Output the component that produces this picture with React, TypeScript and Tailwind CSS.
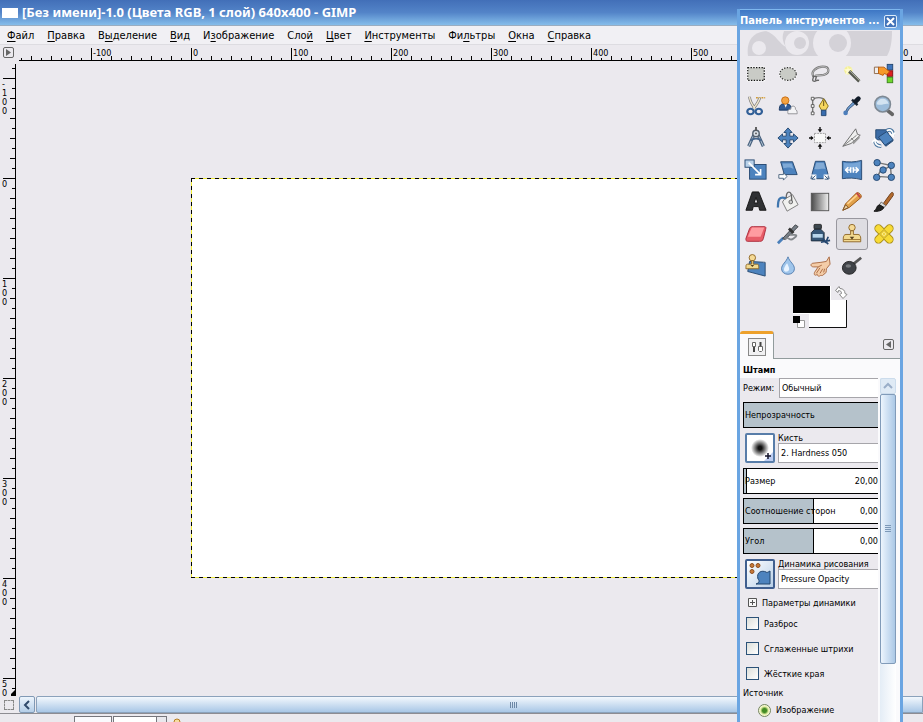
import React, { useEffect, useState } from "react";

const menu = [
  ["", "Ф", "айл"],
  ["", "П", "равка"],
  ["В", "ы", "деление"],
  ["", "В", "ид"],
  ["И", "з", "ображение"],
  ["Сло", "й", ""],
  ["", "Ц", "вет"],
  ["", "И", "нструменты"],
  ["Фи", "л", "ьтры"],
  ["", "О", "кна"],
  ["", "С", "правка"],
];

const blue = "#4d83be";
const navy = "#23466f";

const tools: { name: string; icon: React.ReactNode }[] = [
  {
    name: "Прямоугольное выделение",
    icon: (
      <>
        <rect x="2" y="4" width="20" height="16" fill="#fff" />
        <rect x="3" y="5" width="18" height="14" fill="#c9cbc6" stroke="#111" strokeWidth="1.3" strokeDasharray="1.5 1.5" />
      </>
    ),
  },
  {
    name: "Эллиптическое выделение",
    icon: (
      <>
        <ellipse cx="12" cy="12" rx="10" ry="8" fill="#fff" />
        <ellipse cx="12" cy="12" rx="9" ry="7" fill="#c9cbc6" stroke="#333" strokeWidth="1.3" strokeDasharray="1.5 1.5" />
      </>
    ),
  },
  {
    name: "Свободное выделение",
    icon: (
      <g fill="none">
        <path d="M5 15C1 9 9 4 15 4c8 0 8 7 1 9-4 1-7 0-9 1" stroke="#777" strokeWidth="2.4" />
        <path d="M5 15C1 9 9 4 15 4c8 0 8 7 1 9-4 1-7 0-9 1" stroke="#d5d5d5" strokeWidth=".8" />
        <path d="M4 14l4 1-1 4M5 15c-1 3-2 5 1 5 2 0 2-2 5-1" stroke="#666" strokeWidth="1.5" />
      </g>
    ),
  },
  {
    name: "Выделение смежных областей",
    icon: (
      <>
        <circle cx="8" cy="8" r="4.5" fill="#f5f197" />
        <path d="M7 3l1.5 3.500L12 6l-2 3 2 3-4-1-3 2 1-4-3-2 4-.5z" fill="#fffbd0" />
        <path d="M9 9l11 11" stroke="#55584f" strokeWidth="3.500" />
        <path d="M9.500 8.500l11 11" stroke="#b5b8a7" />
      </>
    ),
  },
  {
    name: "Выделение по цвету",
    icon: (
      <>
        <rect x="15.500" y="1.500" width="6" height="6" fill="#3f74bb" stroke={navy} />
        <rect x="15.500" y="8.500" width="6" height="6" fill="#dc2020" stroke="#850f0f" />
        <rect x="15.500" y="15.500" width="6" height="6" fill="#6fd82c" stroke="#39831a" />
        <path d="M1.500 4.500h5v7h-5z" fill="#eee" stroke="#8c6545" />
        <path d="M6 4.500h6l6 5-3 3-3-1-1 2-5-2z" fill="#f79a2b" stroke="#ba5c0d" />
      </>
    ),
  },
  {
    name: "Умные ножницы",
    icon: (
      <g fill="none">
        <path d="M12 3h10" stroke="#d29b33" strokeWidth="1.500" strokeDasharray="2 1" />
        <path d="M5 2c0 5 3 9 6 13M16 3c-1 5-4 8-7 12" stroke="#777" strokeWidth="3" />
        <path d="M5 2c0 5 3 9 6 13M16 3c-1 5-4 8-7 12" stroke="#eee5cb" strokeWidth="1.500" />
        <ellipse cx="6" cy="18" rx="3.500" ry="3" stroke="#315f97" strokeWidth="2.400" />
        <ellipse cx="15" cy="18" rx="3.500" ry="3" stroke="#315f97" strokeWidth="2.400" />
      </g>
    ),
  },
  {
    name: "Выделение переднего плана",
    icon: (
      <>
        <path d="M2.500 16.500c0-6 2-7 6.500-7s7 2 7 7z" fill="#315b96" stroke="#17345e" />
        <path d="M8 10l1.500 4L11 10z" fill="#fff" />
        <circle cx="9" cy="6" r="4" fill="#f5a442" stroke="#c66b12" />
        <path d="M12 20.500c-1-4 1-5 3-5 0-5 6-4 5 0 2 1 2 3 2 5z" fill="#f4f4f6" stroke="#8e8e93" />
      </>
    ),
  },
  {
    name: "Контуры",
    icon: (
      <>
        <path d="M4 4v16M5 4c8-3 13 0 14 6" fill="none" stroke="#777" strokeWidth="1.500" />
        <path d="M2.500 2.500h3v3h-3zM2.500 10.500h3v3h-3zM2.500 18.500h3v3h-3z" fill="#fff" stroke="#555" />
        <path d="M16 4l5 8-3 5h-4l-3-5z" fill="#f6d75f" stroke="#836b12" />
        <path d="M16 6v6" stroke="#614f14" />
        <path d="M13.500 16.500h5v6h-5z" fill="#386cae" stroke={navy} />
      </>
    ),
  },
  {
    name: "Пипетка",
    icon: (
      <>
        <path d="M14 7L7 14l-3 6 1 1 4-6 7-6z" fill="#6d9bd0" stroke="#39577a" />
        <path d="M12 5l6 6" stroke="#182431" strokeWidth="2.500" />
        <path d="M16 7l3-3" stroke="#111b28" strokeWidth="5" strokeLinecap="round" />
        <circle cx="5" cy="19.500" r="2.500" fill="#4d7ebb" />
      </>
    ),
  },
  {
    name: "Лупа",
    icon: (
      <>
        <path d="M16 17l5 4" stroke="#666" strokeWidth="4" strokeLinecap="round" />
        <circle cx="10.500" cy="10" r="8.500" fill="#9dbddb" stroke="#7e8994" strokeWidth="1.800" />
        <path d="M4 10c1-8 12-8 13 0-3-2-7 2-13 0z" fill="#d3e3f1" />
      </>
    ),
  },
  {
    name: "Измеритель",
    icon: (
      <>
        <path d="M10 8L4 21M14 8l6 13" stroke="#49627e" strokeWidth="3.500" />
        <path d="M10 8L4 21M14 8l6 13" stroke="#b9cada" />
        <path d="M6 15c3-3 9-3 12 0" fill="none" stroke="#46678e" strokeWidth="1.800" />
        <circle cx="12" cy="7" r="3.500" fill="#dae1e8" stroke="#53606e" strokeWidth="1.500" />
        <circle cx="12" cy="7" r="1" fill="#555" />
        <path d="M12 0v4" stroke="#555" strokeWidth="2" />
      </>
    ),
  },
  {
    name: "Перемещение",
    icon: (
      <path
        d="M12 1l4.500 5h-2.500v4h4V7.500l5 4.500-5 4.500V14h-4v4h2.500L12 23l-4.500-5H10v-4H6v2.500L1 12l5-4.500V10h4V6H7.500z"
        fill={blue}
        stroke={navy}
      />
    ),
  },
  {
    name: "Выравнивание",
    icon: (
      <>
        <rect x="6" y="7" width="12" height="10" fill="#f8f8f8" stroke="#999" strokeDasharray="2 1" />
        <path d="M12 0v4M12 20v4M0 12h4M20 12h4" stroke="#111" strokeWidth="1.500" />
        <path d="M9.500 2.500h5L12 6zM9.500 21.500h5L12 18zM2 9.500v5L5 12zM22 9.500v5L19 12z" fill="#111" />
      </>
    ),
  },
  {
    name: "Кадрирование",
    icon: (
      <>
        <path d="M2 21L16 2l2 6 3 1-10 9z" fill="#efefef" stroke="#666" />
        <path d="M2 21L17 9M11 12l3 3" fill="none" stroke="#777" />
        <path d="M13 18l7-7" stroke="#999" strokeWidth="2" />
      </>
    ),
  },
  {
    name: "Вращение",
    icon: (
      <>
        <path d="M3 3h13v5l6 7-8 6-5-7H3z" fill="#3b6ba5" stroke={navy} />
        <path d="M6 11l9-6 7 9-9 6z" fill={blue} stroke={navy} />
        <path d="M15 4c4-2 7 0 7 5M2 14c0 5 3 7 7 7" fill="none" stroke="#48759f" strokeWidth="4" />
        <path d="M15 4c4-2 7 0 7 5M2 14c0 5 3 7 7 7M-1 17l3-4 4 4M18 7l4 3 2-4" fill="none" stroke="#fff" strokeWidth="1.800" />
      </>
    ),
  },
  {
    name: "Масштаб",
    icon: (
      <>
        <rect x="5" y="6" width="18" height="16" fill={blue} stroke={navy} />
        <rect x="0" y="1" width="10" height="8" fill="#b8d1e9" stroke={navy} />
        <path d="M4 4l12 12M17 11v6h-6" fill="none" stroke="#fff" strokeWidth="1.800" />
      </>
    ),
  },
  {
    name: "Искривление",
    icon: (
      <>
        <path d="M4 3h13l5 14H8z" fill={blue} stroke={navy} />
        <path d="M6 5h10l2 6C13 8 11 10 7 10z" fill="#7ea9d6" />
        <path d="M2 17h5v-2l4 4-4 4v-2H2z" fill="#fff" stroke="#49627c" />
      </>
    ),
  },
  {
    name: "Перспектива",
    icon: (
      <>
        <path d="M7 2.500h10l5 19H2z" fill={blue} stroke={navy} />
        <path d="M8 4h8l2 7c-5-1-7 1-12 0z" fill="#83abd5" />
        <path d="M2 17h6v6H2zM16 17h6v6h-6z" fill="#fff" />
        <path d="M3 22l4-4M3 18v4h4M17 18l4 4M21 18v4h-4" fill="none" stroke={navy} />
      </>
    ),
  },
  {
    name: "Зеркало",
    icon: (
      <>
        <path d="M1.500 2.500c6 1 14 1 21-1v21c-7-2-15-2-21-1z" fill={blue} stroke={navy} />
        <path d="M3 4c7 1 12 1 18-1v8H3z" fill="#78a6d7" />
        <path d="M10.500 9v6M10.500 12H5m3-3l-3 3 3 3M13.500 9v6m0-3H19m-3-3l3 3-3 3" fill="none" stroke="#fff" strokeWidth="1.800" />
      </>
    ),
  },
  {
    name: "Преобразование рамкой",
    icon: (
      <>
        <path d="M5 4l14 3 1 13-15-1 3-6 4-1 7-5" fill="none" stroke="#777" strokeWidth="1.500" />
        <g fill={blue} stroke={navy}>
          <circle cx="4.500" cy="4" r="3.500" />
          <circle cx="20" cy="7" r="3.500" />
          <circle cx="11" cy="12" r="3.500" />
          <circle cx="4" cy="20" r="3.500" />
          <circle cx="20" cy="20" r="3.500" />
        </g>
      </>
    ),
  },
  {
    name: "Текст",
    icon: <path d="M8 1h7l8 20h-7l-1-4H9l-1 4H1zM12 7l-2 6h4z" fill="#303134" stroke="#111" fillRule="evenodd" />,
  },
  {
    name: "Плоская заливка",
    icon: (
      <>
        <path d="M8 9l9-5 6 11-12 7-5-10z" fill="#f1f1ef" stroke="#777" />
        <path d="M10 8c-8-3-9 2-9 10" fill="none" stroke="#3f76ae" strokeWidth="2.500" />
        <path d="M10 8c0-9 6-9 6 0v4" fill="none" stroke="#666" strokeWidth="1.500" />
        <circle cx="15" cy="12" r="2" fill="#ccc" stroke="#666" />
      </>
    ),
  },
  {
    name: "Градиент",
    icon: (
      <>
        <defs>
          <linearGradient id="toolGradient">
            <stop stopColor="#4a4a4a" />
            <stop offset="1" stopColor="#f1f1f1" />
          </linearGradient>
        </defs>
        <rect x="2.500" y="2.500" width="19" height="19" fill="url(#toolGradient)" stroke="#555" />
      </>
    ),
  },
  {
    name: "Карандаш",
    icon: (
      <>
        <path d="M2 21l3-7L17 2c2-1 6 2 5 5L9 18z" fill="#e0a04a" stroke="#98530f" />
        <path d="M7 14L18 4" stroke="#ffd18a" strokeWidth="2" />
        <path d="M2 21l3-6 3 3z" fill="#f1d4a2" stroke="#7a5022" />
        <path d="M17 2l4 5" stroke="#c34848" strokeWidth="2" />
      </>
    ),
  },
  {
    name: "Кисть",
    icon: (
      <>
        <path d="M11 14L19 3c2-3 4-1 3 2l-8 11z" fill="#b36b2e" stroke="#693a16" />
        <path d="M9 12l5 4-2 2-5-3z" fill="#ddd" stroke="#666" />
        <path d="M1 22c4-2 2-6 6-7l5 3c-1 3-7 5-11 4z" fill="#222" stroke="#111" />
      </>
    ),
  },
  {
    name: "Ластик",
    icon: (
      <>
        <path d="M1 17L5 6c1-2 2-2 4-2h12c2 0 2 1 1.500 3L20 17c-1 3-2 3-4 3H3c-2 0-2-1-2-3z" fill="#e75d68" stroke="#aa2838" />
        <path d="M3 15l4-9c0-1 1-1 3-1h11l-4 10z" fill="#ff9ca0" />
      </>
    ),
  },
  {
    name: "Аэрограф",
    icon: (
      <>
        <path d="M1 22l6-6" stroke="#4a7fba" strokeWidth="3" />
        <path d="M6 17L20 2l3 2L9 18z" fill="#777f87" stroke="#3e4246" />
        <path d="M9 18c4-5 4 3 9-1 4-3 4-4 1-4h-5" fill="none" stroke="#83878b" strokeWidth="2" />
        <path d="M13 6l5 5" stroke="#333" strokeWidth="3" />
      </>
    ),
  },
  {
    name: "Перо",
    icon: (
      <>
        <path d="M2.500 10.500l4-4h6l4 4v9h-14z" fill="#365778" stroke="#1e2c3b" />
        <rect x="5.500" y="1.500" width="8" height="5" rx="1" fill="#3d4850" stroke="#222" />
        <path d="M4 12h11v4H4z" fill="#b8d6ec" />
        <path d="M13 21l10-2M15 17l6 6M21 15l-3 7" fill="none" stroke="#24466f" strokeWidth="1.800" />
      </>
    ),
  },
  {
    name: "Штамп",
    icon: (
      <>
        <circle cx="12" cy="5" r="3.500" fill="#f5da95" stroke="#8c6423" />
        <path d="M10.500 8.500h3v4h5c2 0 3 2 3 4v4h-19v-4c0-2 1-4 3-4h5z" fill="#f2d98f" stroke="#8c6423" />
        <path d="M3 18h18" stroke="#9b7532" />
        <path d="M9.500 15h5L12 18z" fill="#56401b" />
      </>
    ),
  },
  {
    name: "Лечащая кисть",
    icon: (
      <>
        <path d="M6 6l12 12M18 6L6 18" stroke="#aa901d" strokeWidth="9" strokeLinecap="round" />
        <path d="M6 6l12 12M18 6L6 18" stroke="#f8db35" strokeWidth="7" strokeLinecap="round" />
        <path d="M7 12l5-5 5 5-5 5z" fill="#eed03a" stroke="#b79c28" />
        <path d="M10 12h1M13 12h1M12 10v1M12 13v1" stroke="#fff7b4" strokeWidth="1.500" />
      </>
    ),
  },
  {
    name: "Штамп по перспективе",
    icon: (
      <>
        <path d="M5 7l17 1v15L3 18z" fill={blue} stroke={navy} />
        <circle cx="8" cy="3" r="3.500" fill="#f5da95" stroke="#8c6423" />
        <path d="M7 6h2v4h4c2 0 2 1 2 5H1c0-4 0-5 2-5h4z" fill="#f2d98f" stroke="#8c6423" />
        <path d="M6 11h4l-2 2z" fill="#56401b" />
      </>
    ),
  },
  {
    name: "Размывание",
    icon: (
      <>
        <path d="M12 2c2 6 7 8 7 13 0 8-14 8-14 0 0-5 5-7 7-13z" fill="#9fc5eb" stroke="#507bad" />
        <path d="M11 9c-5 6-4 10 0 9 4-1 2-5 0-9z" fill="#e8f3ff" />
      </>
    ),
  },
  {
    name: "Палец",
    icon: (
      <>
        <path
          d="M22 2l-3 5-6 1-9 1c-3 1-2 4 1 4l5 0-4 6c-1 3 1 4 3 2 0 2 2 3 4 1 1 1 3 0 3-1 3-1 3-3 3-6l4-5z"
          fill="#f4cda8"
          stroke="#a9683f"
        />
        <path d="M8 20l4-6M12 20l3-5M16 19l1-4M10 13l4-2" stroke="#a9683f" />
      </>
    ),
  },
  {
    name: "Осветление",
    icon: (
      <>
        <path d="M12 11l10-8" stroke="#555" strokeWidth="3" />
        <ellipse cx="9" cy="14" rx="7.500" ry="7" fill="#3f4247" stroke="#222" />
        <ellipse cx="8" cy="12" rx="3" ry="2" fill="#777a7d" />
      </>
    ),
  },
];

function ticks(from: number, to: number) {
  const list: number[] = [];
  for (let n = from; n < to; n += 10) list.push(n);
  return list;
}

function useWindowSize() {
  const [size, setSize] = useState({ width: window.innerWidth, height: window.innerHeight });
  useEffect(() => {
    const update = () => setSize({ width: window.innerWidth, height: window.innerHeight });
    window.addEventListener("resize", update);
    return () => window.removeEventListener("resize", update);
  }, []);
  return size;
}

function HorizontalRuler({ width }: { width: number }) {
  return (
    <svg className="h-[17px] min-w-0 flex-1 overflow-hidden" fontSize="9" aria-label="Горизонтальная линейка">
      <g transform="translate(172 0)">
        {ticks(-170, width - 191).map((n) => (
          <g key={n}>
            <path
              d={`M${n + 0.5} ${n % 100 === 0 ? 3 : n % 20 === 0 ? 11 : 13}V16`}
              stroke="#000"
              shapeRendering="crispEdges"
            />
            {n % 100 === 0 && (
              <text x={n + 2} y="11">
                {n}
              </text>
            )}
          </g>
        ))}
        <path d={`M-172 15.5H${width}`} stroke="#000" shapeRendering="crispEdges" />
      </g>
    </svg>
  );
}

function VerticalRuler({ height }: { height: number }) {
  const end = height - 204;
  return (
    <svg className="h-full w-[19px] shrink-0 overflow-hidden" fontSize="9" aria-label="Вертикальная линейка">
      <g transform="translate(0 116)">
        {ticks(-110, end).map((n) => (
          <g key={n}>
            <path
              d={`M${n % 100 === 0 ? 3 : n % 20 === 0 ? 10 : 12} ${n + 0.5}H15`}
              stroke="#000"
              shapeRendering="crispEdges"
            />
            {n % 100 === 0 &&
              String(n)
                .split("")
                .filter((_, i) => n + i * 9 < end)
                .map((c, i) => (
                  <text key={i} x="2" y={n + 9 + i * 9}>
                    {c}
                  </text>
                ))}
          </g>
        ))}
        <path d={`M15.5-114V${height}`} stroke="#000" shapeRendering="crispEdges" />
        <path d={`M11 ${end - 2}l5-5v9h-5z`} fill="#000" />
      </g>
    </svg>
  );
}

function Scale({ label, value, fill }: { label: string; value?: string; fill: number }) {
  return (
    <label className="relative flex h-[26px] items-center justify-between border-y border-l border-black bg-white pl-px">
      <span
        className={"absolute inset-y-0 left-0 bg-[#b5c2cb]" + (fill < 100 ? " border-r border-black" : "")}
        style={{ width: `${fill}%` }}
      />
      <span className="relative whitespace-nowrap">{label}</span>
      {value && <span className="relative">{value}</span>}
      <input type="range" defaultValue={fill} className="absolute inset-0 w-full opacity-0" />
    </label>
  );
}

function Check({ label }: { label: string }) {
  return (
    <label className="flex h-[25px] items-center gap-[5px] pl-[3px]">
      <input
        type="checkbox"
        className="h-[13px] w-[13px] appearance-none border border-[#2b5278] bg-gradient-to-br from-[#dcdfda] to-white"
      />
      {label}
    </label>
  );
}

function ToolBox() {
  return (
    <aside className="absolute top-[9px] right-5 bottom-0 flex w-[166px] flex-col overflow-hidden border-x-[3px] border-[#6aa5e2] bg-[#ebe9ee] text-[9px] leading-3 text-black">
      <header className="flex h-[21px] shrink-0 items-center justify-between border-t border-[#7eb7ee] bg-gradient-to-b from-[#3d76c4] to-[#7ab1e8] pt-[2px] pr-[3px] text-white">
        <h2 className="text-[11px] font-bold whitespace-nowrap">Панель инструментов ...</h2>
        <button aria-label="Закрыть" className="h-[13px] w-[13px] shrink-0 rounded-[2px] border border-[#dcebfa] bg-[#4274ba]">
          <svg viewBox="0 0 11 11" className="h-full w-full">
            <path d="M2 2l7 7M9 2L2 9" stroke="#fff" strokeWidth="2" />
          </svg>
        </button>
      </header>

      <svg viewBox="0 0 160 28" className="h-7 w-full shrink-0">
        <path d="M8 26C6 12 12 2 27 1H152C152 10 151 19 147 26z" fill="#d4d2d8" />
        <g fill="#ebe9ee">
          <path d="M26 1h18c-2 5-2 10 2 16C40 15 36 4 26 1z" />
          <circle cx="19" cy="18" r="7" />
          <circle cx="57" cy="13" r="12" />
          <circle cx="92" cy="13" r="19" />
        </g>
        <g fill="#d4d2d8">
          <circle cx="60" cy="13" r="6" />
          <circle cx="98" cy="13" r="9" />
        </g>
        <path d="M0 26h160v2H0z" fill="#ebe9ee" />
      </svg>

      <div className="grid shrink-0 grid-cols-5">
        {tools.map((tool) => (
          <button
            key={tool.name}
            aria-label={tool.name}
            title={tool.name}
            className={
              "flex h-8 items-center justify-center rounded-[3px] border " +
              (tool.name === "Штамп" ? "border-[#98979e] bg-[#dedde2]" : "border-transparent")
            }
          >
            <svg viewBox="0 0 24 24" fill="none" className="h-[22px] w-[22px] overflow-visible">
              {tool.icon}
            </svg>
          </button>
        ))}
      </div>

      {/* Foreground and background colours */}
      <div className="flex h-[49px] shrink-0 justify-center pt-1">
        <svg viewBox="0 0 54 42" className="h-[42px] w-[54px] overflow-visible">
          <path d="M16 14h38v28H16z" fill="#fff" />
          <path d="M16 41.500h37.500V14" fill="none" stroke="#111" />
          <path d="M0 0h37v27H0z" fill="#000" />
          <path d="M0 27.500h37.500V0" fill="none" stroke="#fff" />
          <path d="M4.500 34.500h7v7h-7z" fill="#fff" stroke="#999" />
          <path d="M0 30h7v7H0z" fill="#000" />
          <path
            d="M42.500 4.500l3.500-4 1 2c3 0 5 2 5 5l2 1-4 4-3.500-4 2-1c0-2-1-3-3-3l-.5 2z"
            fill="#fff"
            stroke="#888"
          />
        </svg>
      </div>

      <div className="flex h-7 shrink-0 items-stretch">
        <button
          aria-label="Параметры инструмента"
          className="flex w-[34px] items-center justify-center rounded-t-[3px] border-t-[3px] border-r border-t-[#eda12c] border-r-[#919b9c] bg-[#fafafc]"
        >
          <svg viewBox="0 0 18 18" className="h-[18px] w-[18px]">
            <rect x=".5" y=".5" width="17" height="17" fill="#f0f0f2" stroke="#888" />
            <path d="M4.500 4.500h3v4h-3zM10.500 8.500h4v4l-1 1h-2l-1-1z" fill="#fff" stroke="#666" />
            <path d="M6 9v5M12.500 4v4" stroke="#444" strokeWidth="2" />
          </svg>
        </button>
        <div className="flex flex-1 items-center justify-end border-b border-[#919b9c] pr-[6px]">
          <button aria-label="Настроить вкладку" className="h-[11px] w-[11px] rounded-[2px] border border-[#666]">
            <svg viewBox="0 0 9 9" className="h-full w-full">
              <path d="M7 1v7L2 4.500z" fill="#666" />
            </svg>
          </button>
        </div>
      </div>

      <div className="flex min-h-0 flex-1 flex-col bg-[#fafafc] pr-1">
        <h3 className="h-[19px] shrink-0 pl-[3px] leading-[22px] font-bold">Штамп</h3>
        <div className="flex min-h-0 flex-1">
          <div className="min-w-0 flex-1 overflow-hidden bg-[#ebe9ee] pl-[3px]">
            <div className="flex h-5 items-center">
              <label htmlFor="mode" className="w-9 shrink-0 whitespace-nowrap">
                Режим:
              </label>
              <select id="mode" className="h-5 min-w-0 flex-1 appearance-none border border-r-0 border-[#a6a5aa] bg-white pl-[2px]">
                <option>Обычный</option>
              </select>
            </div>
            <div className="pt-1">
              <Scale label="Непрозрачность" fill={100} />
            </div>
            <div className="flex gap-[3px] py-[5px] pl-[2px]">
              <button
                aria-label="Выбрать кисть"
                className="h-[30px] w-[30px] shrink-0 rounded-[2px] border-2 border-[#587da9] bg-white"
              >
                <svg viewBox="0 0 26 26" className="h-full w-full">
                  <defs>
                    <radialGradient id="soft">
                      <stop offset=".2" stopColor="#111" />
                      <stop offset="1" stopColor="#111" stopOpacity="0" />
                    </radialGradient>
                  </defs>
                  <circle cx="13" cy="13" r="9" fill="url(#soft)" />
                  <path d="M26 17v9h-9z" fill="#bdcdf2" />
                  <path d="M21 18v6M18 21h6" stroke="#15152b" strokeWidth="1.500" />
                </svg>
              </button>
              <label className="min-w-0 flex-1">
                <span className="block h-[10px] leading-[10px]">Кисть</span>
                <input defaultValue="2. Hardness 050" className="h-5 w-full border border-r-0 border-[#a6a5aa] bg-white pl-[2px]" />
              </label>
            </div>
            <div className="space-y-1">
              <Scale label="Размер" value="20,00" fill={2} />
              <Scale label="Соотношение сторон" value="0,00" fill={52} />
              <Scale label="Угол" value="0,00" fill={52} />
            </div>
            <div className="flex gap-[3px] py-[5px] pl-[2px]">
              <button
                aria-label="Выбрать динамику"
                className="h-[30px] w-[30px] shrink-0 rounded-[2px] border-2 border-[#405f8f] bg-gradient-to-br from-white to-[#b9d0e8]"
              >
                <svg viewBox="0 0 26 26" className="h-full w-full">
                  <g fill="#c87936" stroke="#8b4d20">
                    <circle cx="5" cy="4.500" r="2" />
                    <circle cx="11" cy="4.500" r="2" />
                    <circle cx="5" cy="10.500" r="2" />
                  </g>
                  <path d="M23 23H9c3-1 4-3 2-5-2-7 4-9 8-7 1 1 2 0 4-1z" fill={blue} stroke={navy} />
                </svg>
              </button>
              <label className="min-w-0 flex-1">
                <span className="block h-[10px] leading-[10px] whitespace-nowrap">Динамика рисования</span>
                <input defaultValue="Pressure Opacity" className="h-5 w-full border border-r-0 border-[#a6a5aa] bg-white pl-[2px]" />
              </label>
            </div>
            <button className="flex h-[17px] items-center gap-[5px] pl-[5px] whitespace-nowrap">
              <svg viewBox="0 0 9 9" className="h-[9px] w-[9px]">
                <path d="M.5.5h8v8h-8zM2 4.500h5M4.500 2v5" fill="#f8f8f8" stroke="#555" />
              </svg>
              Параметры динамики
            </button>
            <Check label="Разброс" />
            <Check label="Сглаженные штрихи" />
            <Check label="Жёсткие края" />
            <fieldset>
              <legend className="h-[14px] leading-[14px]">Источник</legend>
              <label className="flex h-5 items-center gap-[5px] pl-[15px]">
                <input
                  type="radio"
                  name="source"
                  defaultChecked
                  className="h-[13px] w-[13px] appearance-none rounded-full border border-[#75865b] bg-[radial-gradient(circle,#438b24_2px,#e7efa5_4px,#fff_6px)]"
                />
                Изображение
              </label>
            </fieldset>
          </div>
          <div className="ml-[2px] flex w-4 shrink-0 flex-col bg-gradient-to-r from-[#e4edf6] to-white">
            <button aria-label="Вверх" className="flex h-4 items-center justify-center rounded-[2px] border border-[#ccdcec] bg-[#dfeaf5]">
              <svg viewBox="0 0 10 8" className="h-2 w-[10px]">
                <path d="M1 6l4-4 4 4" fill="none" stroke="#9aaec8" strokeWidth="2" />
              </svg>
            </button>
            <div className="flex h-[270px] items-center justify-center rounded-[2px] border border-[#819bb9] bg-gradient-to-r from-[#edf5fd] to-[#abc8e6]">
              <svg viewBox="0 0 6 8" className="h-2 w-[6px]">
                <path d="M0 .5h6M0 2.500h6M0 4.500h6M0 6.500h6" stroke="#7d99b8" />
              </svg>
            </div>
          </div>
        </div>
      </div>
    </aside>
  );
}

export default function App() {
  const { width, height } = useWindowSize();

  return (
    <main className="relative flex h-screen w-full flex-col overflow-hidden bg-[#ebe9ee] font-['DejaVu_Sans_Condensed','DejaVu_Sans',sans-serif] text-black">
      <header className="flex h-[26px] shrink-0 items-center gap-1 border-b border-[#9aadc1] bg-gradient-to-b from-[#426fb8] via-[#5384c8] to-[#86bdea] pl-[2px] text-white">
        <span className="h-[10px] w-4 bg-white" />
        <h1 className="font-['Noto_Sans',sans-serif] text-[13px] font-bold whitespace-nowrap">
          [Без имени]-1.0 (Цвета RGB, 1 слой) 640x400 - GIMP
        </h1>
      </header>

      <nav className="flex h-[18px] shrink-0 items-center gap-[13px] bg-[#f1f0f4] pt-[2px] pl-[7px] text-[11px] leading-4">
        {menu.map(([before, key, after]) => (
          <button key={before + key + after} className="whitespace-nowrap">
            {before}
            <span className="underline underline-offset-2">{key}</span>
            {after}
          </button>
        ))}
      </nav>

      <div className="flex shrink-0 border-t border-[#dddce1]">
        <div className="w-[19px] pt-[2px] pl-[3px]">
          <button aria-label="Меню изображения" className="block h-[11px] w-[11px] rounded-[2px] border border-[#666]">
            <svg viewBox="0 0 9 9" className="h-full w-full">
              <path d="M2 1v7l5-3.500z" fill="#666" />
            </svg>
          </button>
        </div>
        <HorizontalRuler width={width} />
      </div>

      <div className="flex min-h-0 flex-1">
        <VerticalRuler height={height} />
        <div className="min-w-0 flex-1 overflow-hidden pt-[116px] pl-[172px]">
          <svg viewBox="0 0 640 400" className="h-[400px] w-[640px] max-w-none" shapeRendering="crispEdges">
            <rect width="640" height="400" fill="#f2ee3c" />
            <rect x="1" y="1" width="638" height="398" fill="#fff" />
            <path d="M0 .5H640M.5 0V400M0 399.5H640M639.5 0V400" fill="none" stroke="#000" strokeDasharray="4 4" />
          </svg>
        </div>
      </div>

      <div className="flex h-[17px] shrink-0 gap-px">
        <div className="w-[18px] shrink-0 pt-1 pl-1">
          <div className="h-[10px] w-[10px] border border-dashed border-[#888]" />
        </div>
        <button
          aria-label="Влево"
          className="flex w-4 shrink-0 items-center justify-center rounded-[2px] border border-[#8099b5] bg-gradient-to-b from-[#edf5fd] to-[#b5cee7]"
        >
          <svg viewBox="0 0 8 10" className="h-[10px] w-2">
            <path d="M6 1L2 5l4 4" fill="none" stroke="#314b6c" strokeWidth="2" />
          </svg>
        </button>
        <div className="flex flex-1 items-center justify-center rounded-l-[2px] border border-[#8ba2bb] bg-gradient-to-b from-[#f3f8fd] to-[#a9c7e6] pl-[68px]">
          <svg viewBox="0 0 8 6" className="h-[6px] w-2">
            <path d="M.5 0v6M2.500 0v6M4.500 0v6M6.500 0v6" stroke="#6c87a5" />
          </svg>
        </div>
      </div>

      <footer className="flex h-[9px] shrink-0 items-start gap-px overflow-hidden border-t border-[#8d8c92] pt-[2px] pl-[74px]">
        <div className="h-4 w-[38px] border border-[#76767c] bg-[#fafafd]" />
        <div className="flex h-4 w-[54px] justify-end border border-[#76767c] bg-white">
          <div className="w-[10px] border-l border-[#76767c] bg-[#e9e8ed]" />
        </div>
        <svg viewBox="0 0 10 10" className="mt-[2px] ml-1 h-[10px] w-[10px]">
          <circle cx="5" cy="4" r="3" fill="#f5dda0" stroke="#b77c22" />
        </svg>
      </footer>

      <ToolBox />
    </main>
  );
}
